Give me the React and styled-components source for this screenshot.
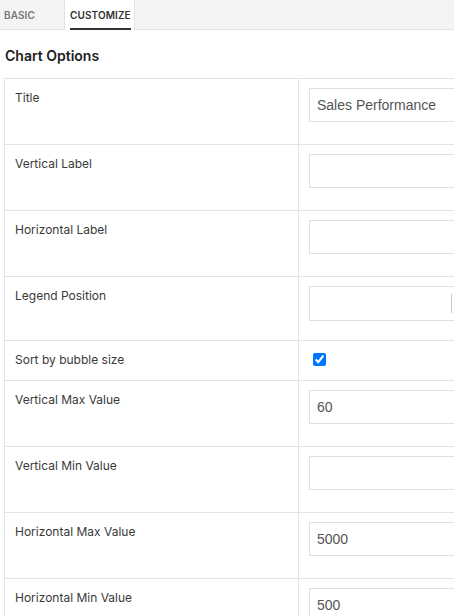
import React from "react";
import styled, { createGlobalStyle } from "styled-components";

const Global = createGlobalStyle`
  html, body { margin: 0; padding: 0; background: #fff; overflow: hidden; }
  body { font-family: Inter, "Noto Sans", sans-serif; color: #333; }
  * { box-sizing: border-box; }
`;

const Page = styled.div`
  width: 760px;
`;

const TabBar = styled.div`
  display: flex;
  height: 30px;
  background: #f4f4f4;
  border-bottom: 1px solid #e3e3e3;
`;

const Tab = styled.div`
  display: flex;
  align-items: stretch;
  padding: ${(p) => (p.$active ? "0 5px" : "0 4px")};
  width: ${(p) => (p.$active ? "71px" : "64px")};
  background: ${(p) => (p.$active ? "#fff" : "transparent")};
  border-left: ${(p) => (p.$active ? "1px solid #e3e3e3" : "none")};
  border-right: ${(p) => (p.$active ? "1px solid #e3e3e3" : "none")};
  margin-bottom: ${(p) => (p.$active ? "-1px" : "0")};
`;

const TabLabel = styled.span`
  display: flex;
  align-items: center;
  font-size: 10px;
  font-weight: 600;
  letter-spacing: 0.1px;
  color: ${(p) => (p.$active ? "#333" : "#777")};
  border-bottom: 2px solid ${(p) => (p.$active ? "#333" : "transparent")};
  padding-top: 2px;
  height: 30px;
`;

const Heading = styled.h2`
  margin: 17px 0 14px 5px;
  font-size: 14px;
  font-weight: 600;
  line-height: 17px;
  color: #222;
`;

const Table = styled.div`
  margin-left: 4px;
  border-top: 1px solid #e3e3e3;
  border-left: 1px solid #e3e3e3;
`;

const Row = styled.div`
  display: grid;
  grid-template-columns: 294px 1fr;
  border-bottom: 1px solid #e3e3e3;
`;

const Label = styled.div`
  border-right: 1px solid #e3e3e3;
  padding: 11px 10px 0 10px;
  font-size: 12px;
  line-height: 15px;
  color: #3a3a3a;
`;

const Value = styled.div`
  padding: ${(p) => p.$pad || "9px 10px 22px 10px"};
`;

const Input = styled.input`
  display: block;
  width: 260px;
  height: 34px;
  margin: 0;
  border: 1px solid #e0e0e0;
  border-radius: 0;
  padding: 0 7px;
  font-family: "Liberation Sans", Arial, sans-serif;
  font-size: 14px;
  color: #555;
  outline: none;
  background: #fff;
`;

const SelectBox = styled.div`
  display: flex;
  align-items: stretch;
  width: 180px;
  height: 35px;
  border: 1px solid #e0e0e0;
`;

const SelectValue = styled.div`
  flex: 1;
`;

const Separator = styled.span`
  width: 1px;
  margin: 7px 0;
  background: #ccc;
`;

const Indicator = styled.div`
  width: 36px;
  display: flex;
  align-items: center;
  justify-content: center;
  color: #ccc;
`;

const Check = styled.input`
  display: block;
  width: 13px;
  height: 13px;
  margin: 3px 3px 3px 4px;
`;

const rows = [
  { label: "Title", value: "Sales Performance" },
  { label: "Vertical Label", value: "" },
  { label: "Horizontal Label", value: "" },
  { label: "Legend Position", type: "select" },
  { label: "Sort by bubble size", type: "check" },
  { label: "Vertical Max Value", value: "60" },
  { label: "Vertical Min Value", value: "" },
  { label: "Horizontal Max Value", value: "5000" },
  { label: "Horizontal Min Value", value: "500" },
];

export default function App() {
  return (
    <Page>
      <Global />
      <TabBar>
        <Tab>
          <TabLabel>BASIC</TabLabel>
        </Tab>
        <Tab $active>
          <TabLabel $active>CUSTOMIZE</TabLabel>
        </Tab>
      </TabBar>
      <Heading>Chart Options</Heading>
      <Table>
        {rows.map((r) => (
          <Row key={r.label}>
            <Label>{r.label}</Label>
            {r.type === "select" ? (
              <Value $pad="9px 10px 19px 10px">
                <SelectBox>
                  <SelectValue />
                  <Separator />
                  <Indicator>
                    <svg width="20" height="20" viewBox="0 0 20 20" fill="currentColor">
                      <path d="M4.516 7.548c0.436-0.446 1.043-0.481 1.576 0l3.908 3.747 3.908-3.747c0.533-0.481 1.141-0.446 1.574 0 0.436 0.445 0.408 1.197 0 1.615-0.406 0.418-4.695 4.502-4.695 4.502-0.217 0.223-0.502 0.335-0.787 0.335s-0.57-0.112-0.789-0.335c0 0-4.287-4.084-4.695-4.502s-0.436-1.17 0-1.615z" />
                    </svg>
                  </Indicator>
                </SelectBox>
              </Value>
            ) : r.type === "check" ? (
              <Value $pad="9px 10px 11px 10px">
                <Check type="checkbox" defaultChecked />
              </Value>
            ) : (
              <Value>
                <Input type="text" defaultValue={r.value} />
              </Value>
            )}
          </Row>
        ))}
      </Table>
    </Page>
  );
}
